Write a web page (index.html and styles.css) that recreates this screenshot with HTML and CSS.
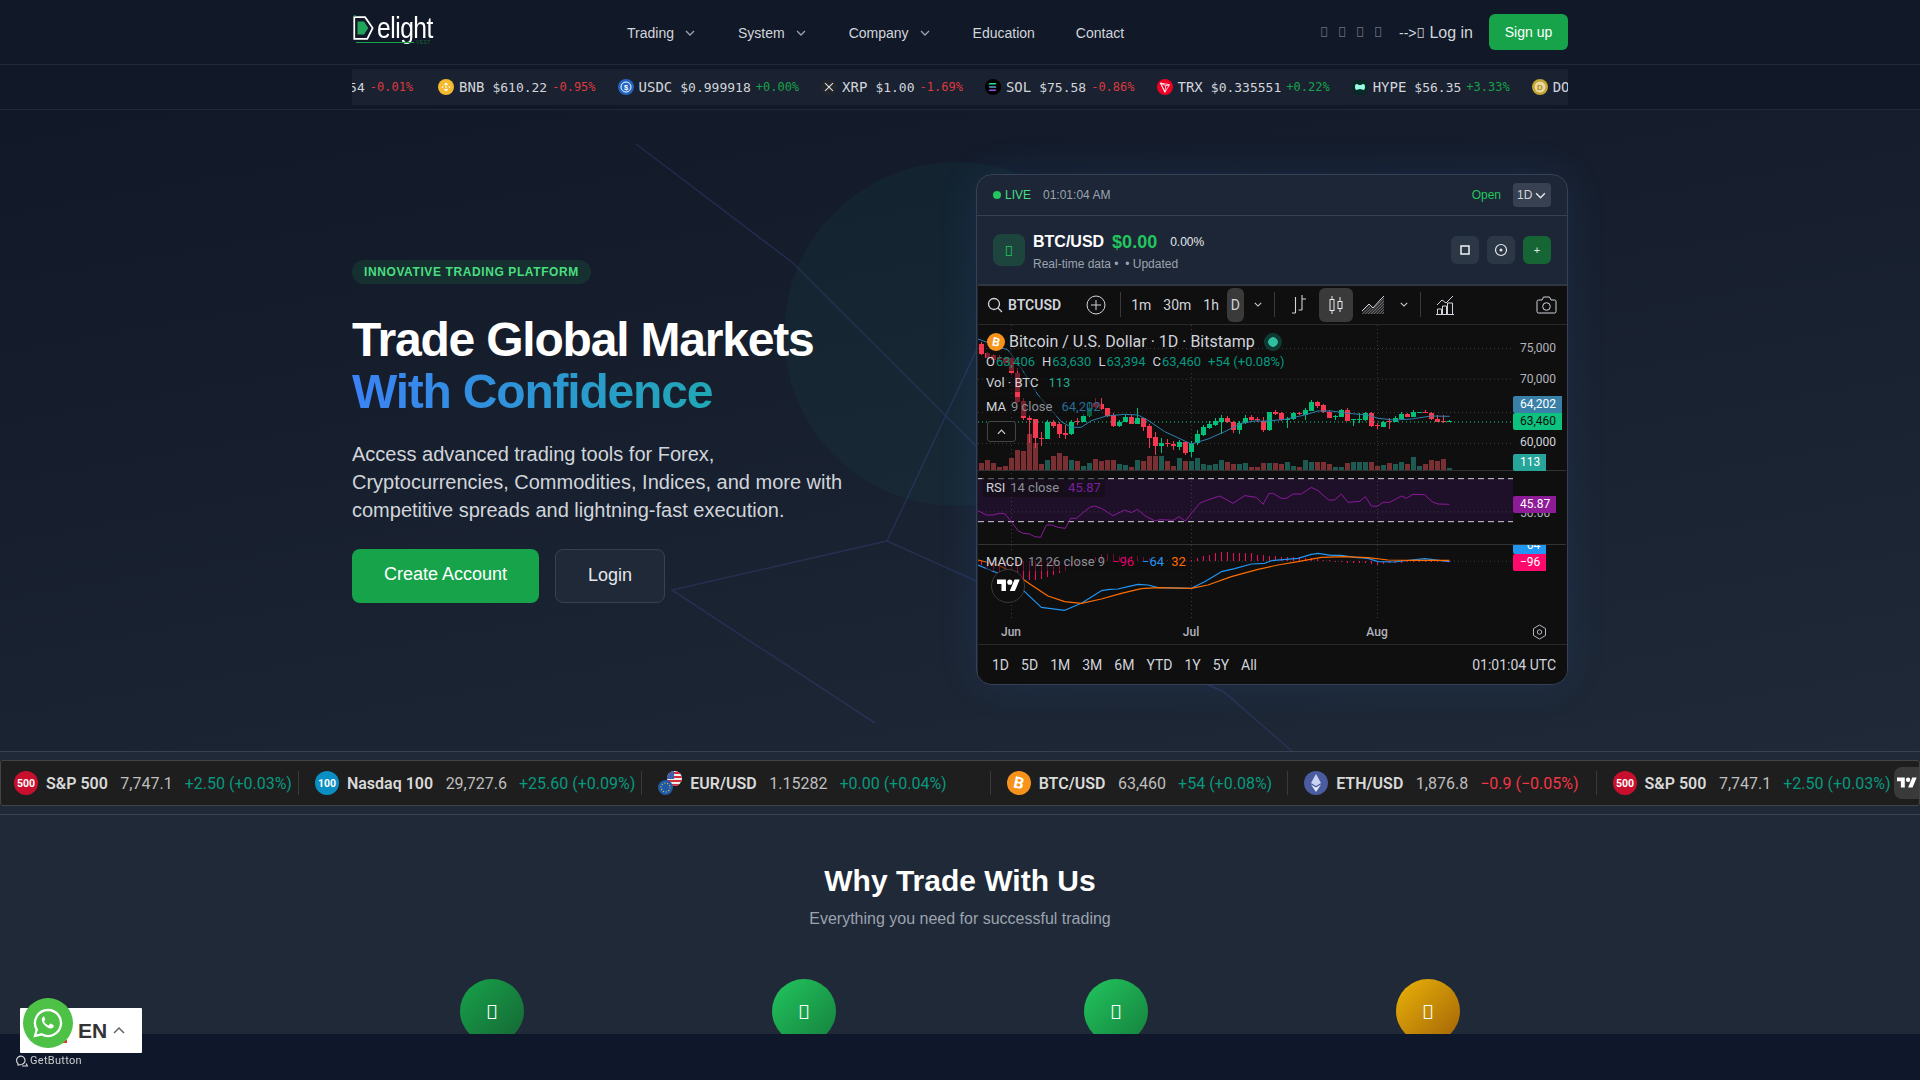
FILE: index.html
```html
<!DOCTYPE html>
<html lang="en">
<head>
<meta charset="utf-8">
<title>Delight - Trade Global Markets</title>
<link rel="stylesheet" href="styles.css">
</head>
<body>
<svg class="defs" width="0" height="0" aria-hidden="true">
  <symbol id="chev" viewBox="0 0 10 6"><path d="M1 1l4 4 4-4" fill="none" stroke="currentColor" stroke-width="1.3"/></symbol>
  <symbol id="tv" viewBox="0 0 36 28"><path d="M14 22H7V11H0V4h14v18zM28 22h-8l7.5-18h8L28 22z" fill="currentColor"/><circle cx="20" cy="8" r="4" fill="currentColor"/></symbol>
  <symbol id="btc" viewBox="0 0 24 24"><circle cx="12" cy="12" r="12" fill="#f7931a"/><text x="12" y="17.5" text-anchor="middle" font-family="Roboto" font-weight="700" font-size="16" fill="#fff" transform="rotate(12 12 12)">B</text></symbol>
  <symbol id="spx" viewBox="0 0 24 24"><circle cx="12" cy="12" r="12" fill="#c8102e"/><text x="12" y="16" text-anchor="middle" font-family="Roboto" font-weight="700" font-size="10.5" fill="#fff">500</text></symbol>
</svg>

<header class="topbar">
  <div class="wrap topbar-row">
    <a class="logo">
      <svg class="logo-mark" viewBox="0 0 20 24" width="20" height="24"><path d="M1 2h10l7 10-5 10H1z" fill="none" stroke="#fff" stroke-width="1.6"/><path d="M4 6h6l4 6-4 6H4z" fill="#22a55a"/><circle cx="1.5" cy="0.8" r="0.8" fill="#22a55a"/></svg>
      <span class="logo-word">elight</span>
      <span class="logo-rule"></span>
      <span class="logo-sub">VEST</span>
    </a>
    <nav class="mainnav">
      <a class="navlink">Trading <svg class="chev"><use href="#chev"/></svg></a>
      <a class="navlink">System <svg class="chev"><use href="#chev"/></svg></a>
      <a class="navlink">Company <svg class="chev"><use href="#chev"/></svg></a>
      <a class="navlink low">Education</a>
      <a class="navlink low last">Contact</a>
    </nav>
    <div class="userbox">
      <span class="social tofu">&#xf39e;</span><span class="social tofu">&#xf099;</span><span class="social tofu">&#xf16d;</span><span class="social tofu">&#xf0e1;</span>
      <a class="login"><span class="arrowtxt">--&gt;</span><span class="tofu login-ico">&#xf2f6;</span> Log in</a>
      <a class="signup">Sign up</a>
    </div>
  </div>
</header>

<div class="coinband">
  <div class="wrap coinstrip">
    <div class="coinrow">
      <span class="coin"><svg class="coinico" viewBox="0 0 16 16"><circle cx="8" cy="8" r="8" fill="#627eea"/></svg><b>ETH</b><i>$1,876.54</i><em class="dn">-0.01%</em></span>
      <span class="coin"><svg class="coinico" viewBox="0 0 16 16"><circle cx="8" cy="8" r="8" fill="#f3ba2f"/><path d="M8 3.5l2 2-1 1-1-1-1 1-1-1zM3.500 8l1-1 1 1-1 1zM10.500 8l1-1 1 1-1 1zM8 7l1 1-1 1-1-1zM8 12.500l-2-2 1-1 1 1 1-1 1 1z" fill="#fff"/></svg><b>BNB</b><i>$610.22</i><em class="dn">-0.95%</em></span>
      <span class="coin"><svg class="coinico" viewBox="0 0 16 16"><circle cx="8" cy="8" r="8" fill="#2265c4"/><circle cx="8" cy="8" r="5" fill="none" stroke="#fff" stroke-width="1"/><text x="8" y="10.600" text-anchor="middle" font-size="7.500" font-family="Liberation Sans" font-weight="700" fill="#fff">$</text></svg><b>USDC</b><i>$0.999918</i><em class="up">+0.00%</em></span>
      <span class="coin"><svg class="coinico" viewBox="0 0 16 16"><circle cx="8" cy="8" r="8" fill="#22262b"/><path d="M4 4.200l4 3.800 4-3.800M4 11.800L8 8l4 3.800" fill="none" stroke="#ddd" stroke-width="1.100"/></svg><b>XRP</b><i>$1.00</i><em class="dn">-1.69%</em></span>
      <span class="coin"><svg class="coinico" viewBox="0 0 16 16"><circle cx="8" cy="8" r="8" fill="#000"/><path d="M4.500 4h7l-1 1.600h-7z" fill="#19e6a4"/><path d="M3.500 7.200h7l1 1.600h-7z" fill="#5aa8d8"/><path d="M4.500 10.400h7l-1 1.600h-7z" fill="#a04cf0"/></svg><b>SOL</b><i>$75.58</i><em class="dn">-0.86%</em></span>
      <span class="coin"><svg class="coinico" viewBox="0 0 16 16"><circle cx="8" cy="8" r="8" fill="#ef0027"/><path d="M3.500 4l9 1.800-4.600 7.400zM3.500 4l4.400 9.200.8-6.400zM12.500 5.800L8.700 6.800" fill="none" stroke="#fff" stroke-width=".8"/></svg><b>TRX</b><i>$0.335551</i><em class="up">+0.22%</em></span>
      <span class="coin"><svg class="coinico" viewBox="0 0 16 16"><circle cx="8" cy="8" r="8" fill="#072a26"/><path d="M3 8c0-3 1.500-3.500 3-2.500 1 .8 3 .8 4 0 1.500-1 3-.5 3 2.500s-1.500 3.500-3 2.500c-1-.8-3-.8-4 0C4.500 11.500 3 11 3 8z" fill="#97fce4"/></svg><b>HYPE</b><i>$56.35</i><em class="up">+3.33%</em></span>
      <span class="coin"><svg class="coinico" viewBox="0 0 16 16"><circle cx="8" cy="8" r="8" fill="#c2a633"/><circle cx="8" cy="8" r="5.500" fill="#e8d9a0"/><text x="8" y="11" text-anchor="middle" font-size="8" font-family="Liberation Sans" font-weight="700" fill="#b08a20">D</text></svg><b>DOGE</b><i>$0.09</i><em class="up">+0.10%</em></span>
    </div>
  </div>
</div>

<section class="hero">
  <svg class="hero-bg" viewBox="0 0 1920 641" preserveAspectRatio="none" aria-hidden="true">
    <circle cx="956" cy="224" r="172" fill="#14b8a6" fill-opacity=".05"/>
    <path d="M636 34L793 153 1110 470M887 431L1000 190M887 431L672 480 875 613M887 431L1224 582 1292 641" fill="none" stroke="#3b4a8c" stroke-opacity=".35" stroke-width="1.500"/>
  </svg>
  <div class="wrap hero-grid">
    <div class="hero-copy">
      <span class="badge">INNOVATIVE TRADING PLATFORM</span>
      <h1>Trade Global Markets<br><span class="grad">With Confidence</span></h1>
      <p>Access advanced trading tools for Forex, Cryptocurrencies, Commodities, Indices, and more with competitive spreads and lightning-fast execution.</p>
      <div class="cta">
        <a class="btn btn-green">Create Account</a>
        <a class="btn btn-dark">Login</a>
      </div>
    </div>

    <div class="card">
      <div class="card-top">
        <span class="live-dot"></span><span class="live">LIVE</span><span class="clock">01:01:04 AM</span>
        <span class="open">Open</span>
        <span class="tf">1D <svg class="chev tf-chev"><use href="#chev"/></svg></span>
      </div>
      <div class="card-sym">
        <span class="sym-ico tofu">&#xf379;</span>
        <div class="sym-text">
          <div class="sym-line"><strong>BTC/USD</strong><span class="sym-price">$0.00</span><span class="sym-pct">0.00%</span></div>
          <div class="sym-sub">Real-time data •&nbsp; • Updated</div>
        </div>
        <div class="sym-btns">
          <span class="sq"><svg width="12" height="12" viewBox="0 0 12 12"><rect x="2" y="2" width="8" height="8" fill="none" stroke="#e5e7eb" stroke-width="1.600"/></svg></span>
          <span class="sq"><svg width="14" height="14" viewBox="0 0 14 14"><circle cx="7" cy="7" r="5.500" fill="none" stroke="#e5e7eb" stroke-width="1.200"/><circle cx="7" cy="7" r="1.500" fill="#e5e7eb"/></svg></span>
          <span class="sq sq-green">+</span>
        </div>
      </div>

      <div class="tv">
        <div class="tv-tools">
          <svg class="ti ti-search" width="16" height="16" viewBox="0 0 16 16"><circle cx="7" cy="7" r="5.500" fill="none" stroke="#d1d4dc" stroke-width="1.300"/><path d="M11 11l4 4" stroke="#d1d4dc" stroke-width="1.300"/></svg>
          <span class="tv-sym">BTCUSD</span>
          <svg class="ti ti-add" width="20" height="20" viewBox="0 0 20 20"><circle cx="10" cy="10" r="9" fill="none" stroke="#d1d4dc"/><path d="M10 5v10M5 10h10" stroke="#d1d4dc"/></svg>
          <span class="tsep s1"></span>
          <span class="tint i1m">1m</span><span class="tint i30">30m</span><span class="tint i1h">1h</span>
          <span class="tint tint-on">D</span>
          <svg class="chev ti-chev"><use href="#chev"/></svg>
          <span class="tsep s2"></span>
          <svg class="ti ti-bars" width="17" height="22" viewBox="0 0 17 22"><path d="M5.500 3v16M2 19h3.500M12 1v15M12 5h4M8.500 16H12" fill="none" stroke="#d1d4dc" stroke-width="1.100"/></svg>
          <span class="candle-on"><svg width="16" height="22" viewBox="0 0 16 22"><path d="M4 2v3M4 17v3M12 3v4M12 15v3" stroke="#e5e7eb"/><rect x="2" y="5.500" width="4" height="11" fill="none" stroke="#e5e7eb"/><rect x="10" y="7.500" width="4" height="7" fill="none" stroke="#e5e7eb"/></svg></span>
          <svg class="ti ti-area" width="24" height="20" viewBox="0 0 24 20"><defs><pattern id="hatch" width="2" height="2" patternUnits="userSpaceOnUse" patternTransform="rotate(45)"><path d="M0 0v2" stroke="#d1d4dc" stroke-width="1"/></pattern></defs><path d="M1 17l7-7 4 4 7-8 4-4v17H1z" fill="url(#hatch)"/><path d="M1 16l7-7 4 4 7-8 4-4" fill="none" stroke="#d1d4dc"/></svg>
          <svg class="chev ti-chev2"><use href="#chev"/></svg>
          <span class="tsep s3"></span>
          <svg class="ti ti-ind" width="18" height="20" viewBox="0 0 18 20"><path d="M1 10l5-5 4 3 7-7" fill="none" stroke="#d1d4dc"/><path d="M1.500 19v-5h4v5M6.500 19v-8h4v8M11.500 19V8h5v11M0 19.500h18" fill="none" stroke="#d1d4dc"/></svg>
          <svg class="ti ti-cam" width="21" height="18" viewBox="0 0 21 18"><path d="M1 5.500a1.500 1.500 0 0 1 1.500-1.500H6l1.500-3h6L15 4h3.500A1.500 1.500 0 0 1 20 5.500v10a1.500 1.500 0 0 1-1.500 1.500h-16A1.500 1.500 0 0 1 1 15.500z" fill="none" stroke="#d1d4dc"/><circle cx="10.500" cy="10.500" r="3.800" fill="none" stroke="#d1d4dc"/></svg>
        </div>

        <div class="canvas">
          <svg id="plot" class="plot" viewBox="0 -30 1764 885" aria-hidden="true"></svg>

          <div class="lg lg-title"><svg class="lg-btc"><use href="#btc"/></svg><span>Bitcoin / U.S. Dollar · 1D · Bitstamp</span><span class="lg-status"></span></div>
          <div class="lg lg-ohlc"><span>O</span><u>63,406</u><span class="m">H</span><u>63,630</u><span class="m">L</span><u>63,394</u><span class="m">C</span><u>63,460</u><u class="m">+54 (+0.08%)</u></div>
          <div class="lg lg-vol"><span>Vol · BTC</span><u class="vol">113</u></div>
          <div class="lg lg-ma"><span>MA</span><span class="g">9 close</span><u class="ma">64,202</u></div>
          <div class="collapse"><svg class="chev up"><use href="#chev"/></svg></div>
          <div class="lg lg-rsi"><span>RSI</span><span class="g">14 close</span><u class="rsi">45.87</u></div>
          <div class="lg lg-macd"><span>MACD</span><span class="g">12 26 close 9</span><u class="pk">−96</u><u class="bl">−64</u><u class="or">32</u></div>
          <span class="tvbadge"><svg width="23" height="18"><use href="#tv"/></svg></span>

          <span class="tick t75">75,000</span>
          <span class="tick t70">70,000</span>
          <span class="tick t60">60,000</span>
          <span class="tick t50">50.00</span>
          <span class="plabel p-ma">64,202</span>
          <span class="plabel p-last">63,460</span>
          <span class="plabel p-vol">113</span>
          <span class="plabel p-rsi">45.87</span>
          <span class="clip-64"><span class="plabel p-64">−64</span></span>
          <span class="plabel p-96">−96</span>
        </div>

        <div class="timeaxis">
          <span class="mon mjun">Jun</span><span class="mon mjul">Jul</span><span class="mon maug">Aug</span>
          <svg class="hexcog" width="15" height="16" viewBox="0 0 15 16"><path d="M7.500 1l6 3.500v7l-6 3.500-6-3.500v-7z" fill="none" stroke="#b2b5be"/><circle cx="7.500" cy="8" r="2.200" fill="none" stroke="#b2b5be"/></svg>
        </div>
        <div class="ranges">
          <span>1D</span><span>5D</span><span>1M</span><span>3M</span><span>6M</span><span>YTD</span><span>1Y</span><span>5Y</span><span>All</span>
          <span class="utc">01:01:04 UTC</span>
        </div>
      </div>
    </div>
  </div>
</section>

<section class="tickersec">
  <div class="tape">
    <div class="tape-item"><svg class="tape-ico"><use href="#spx"/></svg><b>S&amp;P 500</b><i>7,747.1</i><em class="tup">+2.50 (+0.03%)</em></div>
    <div class="tape-item"><svg class="tape-ico" viewBox="0 0 24 24"><circle cx="12" cy="12" r="12" fill="#0a8fc4"/><text x="12" y="16" text-anchor="middle" font-family="Roboto" font-weight="700" font-size="10.500" fill="#fff">100</text></svg><b>Nasdaq 100</b><i>29,727.6</i><em class="tup">+25.60 (+0.09%)</em></div>
    <div class="tape-item pad-eur"><svg class="tape-ico" viewBox="0 0 24 24"><clipPath id="usc"><circle cx="16.500" cy="7.500" r="7.500"/></clipPath><g clip-path="url(#usc)"><rect x="9" width="15" height="15" fill="#eee"/><path d="M9 2h15M9 6h15M9 10h15M9 14h15" stroke="#d22f3c" stroke-width="2"/><rect x="9" width="7" height="8" fill="#3c5fb0"/></g><circle cx="7.500" cy="16.500" r="7.500" fill="#1f5aa8"/><circle cx="7.500" cy="16.500" r="4.500" fill="none" stroke="#f4c430" stroke-width="1.200" stroke-dasharray="1 1.800"/></svg><b>EUR/USD</b><i>1.15282</i><em class="tup">+0.00 (+0.04%)</em></div>
    <div class="tape-item pad-btc"><svg class="tape-ico"><use href="#btc"/></svg><b>BTC/USD</b><i>63,460</i><em class="tup">+54 (+0.08%)</em></div>
    <div class="tape-item pad-eth"><svg class="tape-ico" viewBox="0 0 24 24"><circle cx="12" cy="12" r="12" fill="#4a5ba0"/><path d="M12 3l5 9-5 3-5-3z" fill="#c9d4f5"/><path d="M12 16.500l5-3-5 7.500-5-7.500z" fill="#e4eafc"/></svg><b>ETH/USD</b><i>1,876.8</i><em class="tdn">−0.9 (−0.05%)</em></div>
    <div class="tape-item"><svg class="tape-ico"><use href="#spx"/></svg><b>S&amp;P 500</b><i>7,747.1</i><em class="tup">+2.50 (+0.03%)</em></div>
    <span class="tape-tab"><svg width="20" height="16"><use href="#tv"/></svg></span>
  </div>
</section>

<section class="features">
  <h2>Why Trade With Us</h2>
  <p class="lead">Everything you need for successful trading</p>
  <div class="feat-row">
    <span class="feat f-a tofu">&#xf201;</span>
    <span class="feat f-b tofu">&#xf3ed;</span>
    <span class="feat f-b tofu">&#xf0e7;</span>
    <span class="feat f-c tofu">&#xf590;</span>
  </div>
</section>

<div class="footband"></div>

<div class="langbox">
  <span class="flagbit"></span>
  <span class="en">EN</span>
  <svg class="lang-chev" viewBox="0 0 12 7"><path d="M1 6l5-5 5 5" fill="none" stroke="#666" stroke-width="1.500"/></svg>
</div>
<span class="wa">
  <svg width="32" height="32" viewBox="0 0 32 32"><path d="M16 3a13 13 0 0 0-11.200 19.600L3 29l6.600-1.700A13 13 0 1 0 16 3z" fill="none" stroke="#fff" stroke-width="2.300"/><path d="M12 9.500c-.5 0-1.500.5-2 1.800-.6 1.600 0 3.700 2 6.200 2.200 2.700 4.700 4 6.600 4 1.600 0 2.900-1 3.100-2.300.1-.6 0-1-.3-1.200l-2.600-1.300c-.4-.2-.7 0-.9.300l-1 1.200c-.2.200-.5.200-.8.100-1.800-.8-3.100-2-4-3.700-.1-.3 0-.5.200-.7l.8-1c.2-.3.200-.5.100-.8l-1.100-2.500c-.1-.1-.2-.1-.1-.1z" fill="#fff"/></svg>
</span>
<span class="getbutton"><svg width="12" height="12" viewBox="0 0 12 12"><path d="M2 8.500A4.200 4.200 0 1 1 5.500 9.500L2 10z" fill="none" stroke="#ddd" stroke-width="1.100"/><path d="M6 11h5.500L10 8.500" fill="none" stroke="#ddd" stroke-width="1.100"/></svg>GetButton</span>

<script src="chart.js"></script>
</body>
</html>
```

FILE: styles.css
```css
* { box-sizing: border-box; }
html, body { margin: 0; height: 100%; }
body {
  width: 1920px; height: 1080px; overflow: hidden;
  display: flex; flex-direction: column;
  background: #111827; color: #fff;
  font-family: "Liberation Sans", Arial, sans-serif;
  position: relative;
}
.defs { position: absolute; }
i, em { font-style: normal; }
u { text-decoration: none; }
.wrap { width: 1216px; margin: 0 auto; }
.chev { width: 10px; height: 6px; color: #9ca3af; display: inline-block; }
.tofu { font-family: "Noto Sans", sans-serif; }

/* top bar */
.topbar { height: 65px; flex: none; background: #111827; border-bottom: 1px solid #1f2937; }
.topbar-row { height: 64px; display: flex; align-items: center; position: relative; }
.logo { position: relative; width: 82px; height: 30px; display: block; margin-top: -4px; }
.logo-mark { position: absolute; left: 1px; top: 0; width: 22px; height: 26px; }
.logo-word { position: absolute; left: 25px; top: -2px; font-size: 30px; line-height: 30px; letter-spacing: -.6px; color: #fff; transform: scaleX(.82); transform-origin: left center; }
.logo-rule { position: absolute; left: 4px; top: 27px; width: 58px; height: 1px; background: #16a34a; }
.logo-sub { position: absolute; left: 64px; top: 25px; font-size: 5px; line-height: 5px; color: #166534; letter-spacing: .4px; }
.mainnav { display: flex; align-items: center; gap: 43px; margin-left: 193px; padding-top: 2px; }
.navlink { font-size: 14px; color: #d1d5db; display: flex; align-items: center; gap: 11px; }
.navlink.last { margin-left: -2px; }
.userbox { margin-left: auto; display: flex; align-items: center; }
.social { font-size: 14px; color: #6b7280; width: 18px; line-height: 16px; }
.login { font-size: 16px; color: #d1d5db; margin-left: 7px; white-space: nowrap; }
.arrowtxt { font-size: 14px; }
.login-ico { font-size: 14px; }
.signup { margin-left: 16px; width: 79px; height: 36px; border-radius: 6px; background: #16a34a; color: #fff; font-size: 14px; display: flex; align-items: center; justify-content: center; }

/* coin strip */
.coinband { flex: none; height: 45px; padding: 4px 0; background: #111827; border-bottom: 1px solid #1f2937; }
.coinstrip { height: 36px; background: #1a2130; overflow: hidden; }
.coinrow { display: flex; align-items: center; height: 36px; gap: 22px; margin-left: -112px; white-space: nowrap; font-family: "DejaVu Sans Mono", monospace; }
.coin { display: flex; align-items: center; flex: none; }
.coin:first-child { margin-right: 3px; }
.coinico { width: 16px; height: 16px; margin-right: 5px; }
.coin b { font-weight: 400; font-size: 14px; color: #d1d5db; margin-right: 8px; }
.coin i { font-size: 13px; color: #d1d5db; margin-right: 5px; }
.coin em { font-size: 12px; }
.dn { color: #dc3a3f; }
.up { color: #16a34a; }

/* hero */
.hero { flex: none; height: 641px; position: relative; background: linear-gradient(170deg, #111827 0%, #1f2937 100%); padding-top: 64px; overflow: hidden; }
.hero-bg { position: absolute; left: 0; top: 0; width: 1920px; height: 641px; }
.hero-grid { position: relative; display: grid; grid-template-columns: 592px 592px; column-gap: 32px; align-items: center; }
.hero-copy { padding-top: 3px; }
.badge { display: inline-block; height: 24px; line-height: 24px; padding: 0 12px; border-radius: 12px; background: rgba(34,197,94,.12); color: #4ade80; font-size: 12px; font-weight: 700; letter-spacing: .6px; }
h1 { margin: 30px 0 0; font-size: 48px; line-height: 52px; font-weight: 700; letter-spacing: -1.2px; color: #fff; }
.grad { background: linear-gradient(90deg, #3b82f6, #20a8b4); -webkit-background-clip: text; background-clip: text; color: transparent; }
.hero-copy p { margin: 22px 0 0; width: 512px; font-size: 20px; line-height: 28px; color: #d1d5db; }
.cta { display: flex; gap: 16px; margin-top: 25px; }
.btn { height: 54px; border-radius: 8px; font-size: 18px; display: flex; align-items: center; justify-content: center; }
.btn-green { width: 187px; background: #16a34a; color: #fff; padding-bottom: 2px; }
.btn-dark { width: 110px; background: #1f2937; border: 1px solid #374151; color: #e5e7eb; }

/* card */
.card { height: 511px; border: 1px solid #374151; border-radius: 16px; overflow: hidden; background: #1c2636; box-shadow: 0 0 40px rgba(59,130,246,.12); display: flex; flex-direction: column; }
.card-top { flex: none; height: 41px; display: flex; align-items: center; padding: 0 16px; border-bottom: 1px solid #374151; font-size: 12px; }
.live-dot { width: 8px; height: 8px; border-radius: 50%; background: #22c55e; }
.live { color: #4ade80; margin-right: 12px; margin-left: 4px; }
.clock { color: #9ca3af; }
.open { color: #22c55e; margin-left: auto; margin-right: 12px; }
.tf { width: 38px; height: 24px; border-radius: 4px; background: #374151; color: #d1d5db; display: flex; align-items: center; padding-left: 4px; gap: 3px; }
.tf-chev { color: #e5e7eb; width: 11px; height: 7px; }
.card-sym { flex: none; height: 68px; display: flex; align-items: center; padding: 0 16px; }
.sym-ico { width: 32px; height: 32px; border-radius: 8px; background: rgba(34,197,94,.2); color: #22c55e; font-size: 14px; display: flex; align-items: center; justify-content: center; }
.sym-text { margin-left: 8px; }
.sym-line { display: flex; align-items: center; margin-top: 2px; }
.sym-line strong { font-size: 16px; color: #fff; }
.sym-price { font-size: 18px; font-weight: 700; color: #22c55e; margin-left: 8px; }
.sym-pct { font-size: 12px; color: #e5e7eb; margin-left: 13px; }
.sym-sub { font-size: 12px; color: #9ca3af; margin-top: 4px; }
.sym-btns { margin-left: auto; display: flex; gap: 8px; }
.sq { width: 28px; height: 28px; border-radius: 6px; background: #2c3746; display: flex; align-items: center; justify-content: center; color: #e5e7eb; font-size: 11px; }
.sq-green { background: #166534; }

/* chart */
.tv { flex: 1; background: #0f0f0f; border-top: 2px solid #2f3744; margin: 0 0 0 1px; display: flex; flex-direction: column; font-family: Roboto, sans-serif; color: #d1d4dc; }
.tv-tools { flex: none; height: 39px; display: flex; align-items: center; border-bottom: 1px solid #2a2a2a; padding-left: 9px; padding-bottom: 1px; }
.ti { flex: none; }
.tv-sym { font-size: 14px; font-weight: 600; margin-left: 5px; }
.ti-add { margin-left: 25px; }
.tsep { width: 1px; height: 25px; background: #3a3a3a; flex: none; }
.s1 { margin-left: 14px; }
.tint { font-size: 14px; }
.i1m { margin-left: 10px; }
.i30 { margin-left: 12px; }
.i1h { margin-left: 12px; }
.tint-on { width: 17px; height: 34px; margin-left: 8px; border-radius: 6px; background: #3a3a3a; display: flex; align-items: center; justify-content: center; }
.ti-chev { width: 8px; height: 5px; margin-left: 10px; color: #d1d4dc; }
.s2 { margin-left: 12px; }
.ti-bars { margin-left: 15px; }
.candle-on { width: 34px; height: 34px; margin-left: 12px; border-radius: 6px; background: #3a3a3a; display: flex; align-items: center; justify-content: center; }
.ti-area { margin-left: 8px; }
.ti-chev2 { width: 8px; height: 5px; margin-left: 15px; color: #d1d4dc; }
.s3 { margin-left: 12px; }
.ti-ind { margin-left: 15px; }
.ti-cam { margin-left: auto; margin-right: 10px; }

.canvas { flex: none; height: 295px; position: relative; overflow: hidden; }
.plot { position: absolute; left: 0; top: 0; width: 588px; height: 295px; }
.lg { position: absolute; left: 8px; display: flex; align-items: center; height: 19px; font-size: 13px; gap: 5px; white-space: nowrap; color: #d1d4dc; background: rgba(15,15,15,.55); }
.lg-title { top: 7px; font-size: 16px; gap: 4px; left: 9px; background: none; }
.lg-btc { width: 18px; height: 18px; }
.lg-status { width: 18px; height: 18px; margin-left: 5px; border-radius: 50%; background: radial-gradient(circle, #2fbf9f 0 4.500px, #0f3a33 5px); }
.lg-ohlc { top: 27px; gap: 1px; color: #d1d4dc; }
.lg-ohlc u { color: #089981; }
.lg-ohlc .m { margin-left: 6px; }
.lg-vol { top: 48px; gap: 10px; }
.lg-ma { top: 72px; }
.g { color: #8c8f98; }
.vol { color: #22ab94; }
.ma { color: #2a6d9a; margin-left: 4px; }
.rsi { color: #7b1fa2; margin-left: 4px; }
.pk { color: #e4006a; margin-left: 2px; }
.bl { color: #2196f3; margin-left: 3px; }
.or { color: #ff6d00; margin-left: 2px; }
.lg-rsi { top: 152px; padding-right: 4px; height: 20px; left: 4px; padding-left: 4px; }
.lg-macd { top: 227px; }
.collapse { position: absolute; left: 9px; top: 96px; width: 29px; height: 21px; border: 1px solid #444; border-radius: 3px; display: flex; align-items: center; justify-content: center; background: #0f0f0f; }
.chev.up { transform: rotate(180deg); color: #d1d4dc; width: 9px; }
.tvbadge { position: absolute; left: 13px; top: 244px; width: 34px; height: 34px; border-radius: 50%; background: #0f0f0f; border: 1px solid #3a3a3a; color: #fff; display: flex; align-items: center; justify-content: center; }
.tick { position: absolute; left: 542px; font-size: 12px; color: #b2b5be; line-height: 16px; }
.t75 { top: 15px; }
.t70 { top: 46px; }
.t60 { top: 109px; color: #d1d4dc; }
.t50 { top: 180px; }
.plabel { position: absolute; left: 535px; font-size: 12px; line-height: 17px; height: 17px; color: #fff; padding: 0 7px; border-radius: 2px 0 0 2px; }
.p-ma { top: 71px; width: 49px; background: #3880a8; }
.p-last { top: 88px; width: 49px; background: #0cc27e; color: #0f0f0f; }
.p-vol { top: 129px; width: 33px; background: #26a69a; }
.p-rsi { top: 171px; width: 43px; background: #8e1b97; }
.clip-64 { position: absolute; left: 535px; top: 220px; width: 33px; height: 9px; overflow: hidden; }
.p-64 { left: 0; top: -8px; width: 33px; background: #2196f3; }
.p-96 { top: 229px; width: 33px; background: #ff0a6c; }

.timeaxis { flex: none; height: 25px; position: relative; border-bottom: 1px solid #2a2a2a; }
.mon { position: absolute; top: 5px; font-size: 12px; font-weight: 500; color: #b2b5be; transform: translateX(-50%); }
.mjun { left: 33px; }
.mjul { left: 213px; }
.maug { left: 399px; }
.hexcog { position: absolute; left: 554px; top: 4px; }
.ranges { flex: 1; display: flex; align-items: center; font-size: 14px; gap: 12px; padding: 0 11px 0 14px; color: #d1d4dc; }
.utc { margin-left: auto; }

/* tape */
.tickersec { flex: none; height: 64px; background: #1f2937; border-top: 1px solid #374151; border-bottom: 1px solid #374151; padding-top: 8px; }
.tape { height: 46px; background: #1e1e1e; border: 1px solid #434343; border-radius: 3px; display: flex; align-items: center; padding-left: 13px; position: relative; overflow: hidden; white-space: nowrap; font-family: Roboto, sans-serif; font-size: 16px; }
.tape-item { display: flex; align-items: center; flex: none; height: 24px; padding-right: 6px; margin-right: 16px; border-right: 1px solid #3a3a3a; }
.pad-eur { padding-right: 43px; }
.pad-btc { padding-right: 15px; }
.pad-eth { padding-right: 17px; }
.tape-ico { width: 24px; height: 24px; margin-right: 8px; flex: none; }
.tape-item b { font-weight: 600; color: #d9d9d9; margin-right: 12.500px; }
.tape-item i { color: #bfbfbf; margin-right: 12px; }
.tup { color: #089981; }
.tdn { color: #f23645; }
.tape-tab { position: absolute; right: 0; top: 6px; width: 25px; height: 32px; background: #3a3a3a; border-radius: 8px 0 0 8px; color: #fff; display: flex; align-items: center; justify-content: center; }

/* features */
.features { flex: 1; min-height: 0; overflow: hidden; background: #1f2937; text-align: center; padding-top: 48px; }
h2 { margin: 0; font-size: 30px; line-height: 36px; font-weight: 700; color: #fff; }
.lead { margin: 8px 0 0; font-size: 16px; line-height: 24px; color: #9ca3af; }
.feat-row { display: grid; grid-template-columns: repeat(4, 64px); column-gap: 248px; justify-content: center; margin-top: 48px; }
.feat { width: 64px; height: 64px; border-radius: 50%; color: #fff; font-size: 20px; display: flex; align-items: center; justify-content: center; }
.f-a { background: linear-gradient(135deg, #16a34a, #166534); }
.f-b { background: linear-gradient(135deg, #22c55e, #15803d); }
.f-c { background: linear-gradient(135deg, #eab308, #a16207); }
.footband { flex: none; height: 46px; background: #0f172a; }

/* floating widgets */
.langbox { position: fixed; left: 20px; top: 1008px; width: 122px; height: 45px; background: #fff; border-radius: 1px; display: flex; align-items: center; padding-left: 58px; gap: 6px; }
.flagbit { position: absolute; left: 42px; top: 32px; width: 5px; height: 3px; background: #d33; }
.en { font-size: 21px; font-weight: 700; color: #333; }
.lang-chev { width: 12px; height: 7px; }
.wa { position: fixed; left: 23px; top: 998px; width: 50px; height: 50px; border-radius: 50%; background: #4dc247; display: flex; align-items: center; justify-content: center; }
.getbutton { position: fixed; left: 16px; top: 1055px; display: flex; align-items: center; gap: 2px; font-family: Roboto, sans-serif; font-size: 11px; line-height: 12px; color: #ccc; letter-spacing: .3px; }
```

FILE: chart.js
```js
(function () {
  var NS = 'http://www.w3.org/2000/svg';
  var svg = document.getElementById('plot');
  var RED = '#f7374f', GRN = '#00bf78', VRED = '#7a2f32', VGRN = '#1c5a52';

  function el(name, attrs) {
    var n = document.createElementNS(NS, name);
    for (var k in attrs) n.setAttribute(k, attrs[k]);
    svg.appendChild(n);
    return n;
  }
  function pts(list, dy) {
    return list.map(function (p) { return p[0] + ',' + (p[1] + dy); }).join(' ');
  }
  function crispY(v) { return Math.round(v / 3) * 3; }

  /* color, body top, body bottom, wick top, wick bottom, volume top */
  var c = [
    ['r',27,57,20,60,385],['r',55,68,50,72,376],['r',60,75,56,78,384],['r',65,71,60,74,396],['r',70,85,66,88,392],
    ['r',70,115,65,120,369],['r',115,200,100,205,345],['r',198,250,190,255,348],['r',250,254,240,325,297],['r',252,308,252,340,325],
    ['r',308,312,290,332,388],['g',262,312,255,312,376],['r',262,272,255,280,363],['r',267,297,262,310,355],['r',295,300,270,312,364],
    ['g',260,298,255,300,376],['r',258,261,248,270,378],['g',243,260,238,262,392],['g',218,242,200,245,385],['r',205,215,190,218,372],
    ['r',208,222,190,225,378],['r',220,243,218,245,375],['r',240,272,235,275,375],['g',260,272,255,275,388],['g',245,260,238,262,390],
    ['r',247,266,240,268,395],['g',250,266,218,268,376],['r',250,275,248,288,378],['r',273,308,268,340,363],['r',306,332,290,360,363],
    ['g',325,332,310,355,363],['r',323,326,312,335,378],['r',327,333,318,345,392],['g',322,335,315,345,370],['r',322,355,320,360,378],
    ['g',325,352,318,365,378],['g',298,325,285,330,369],['g',277,300,270,302,388],['g',268,278,258,282,390],['g',258,270,250,272,388],
    ['g',250,260,240,298,376],['r',250,262,243,265,380],['r',262,285,258,295,388],['g',265,285,258,298,386],['g',248,265,240,268,385],
    ['r',245,255,240,258,396],['r',252,255,246,260,396],['r',257,285,245,292,385],['g',232,285,232,287,383],['r',232,237,225,240,384],
    ['r',235,255,232,258,388],['g',252,255,245,278,382],['g',235,253,232,256,392],['r',233,237,230,240,395],['g',226,240,220,255,376],
    ['g',202,227,195,228,380],['r',202,212,198,218,380],['r',210,232,206,234,382],['r',230,248,224,250,388],['g',244,247,240,255,396],
    ['g',226,245,222,247,395],['r',226,257,218,258,384],['g',252,255,252,272,382],['g',252,254,235,265,380],['g',235,255,230,257,380],
    ['r',235,272,230,275,380],['r',270,273,265,282,393],['g',260,275,258,275,389],['r',258,260,250,282,384],['g',250,260,242,262,386],
    ['g',238,252,232,254,380],['r',237,245,234,247,386],['g',232,245,226,247,366],['g',231,233,230,234,392],['r',231,233,224,235,388],
    ['r',235,253,230,255,375],['r',253,260,240,262,378],['r',258,261,240,264,372],['g',258,260,256,261,399]
  ];

  var ma = [[0,12],[90,45],[130,100],[180,180],[250,260],[280,277],[310,277],[340,257],[385,243],[440,238],[480,240],[510,256],[560,290],[640,327],[690,312],[740,290],[790,265],[830,258],[870,258],[920,253],[980,240],[1020,228],[1060,228],[1110,235],[1170,240],[1200,250],[1250,255],[1300,252],[1360,243],[1415,244]];
  var rsi = [[0,122],[25,135],[45,135],[65,130],[80,131],[100,155],[120,182],[135,190],[155,192],[170,200],[188,202],[205,165],[220,165],[240,172],[262,175],[278,145],[295,145],[315,128],[335,112],[350,108],[370,115],[405,137],[440,120],[460,128],[478,118],[505,140],[530,152],[550,149],[585,151],[603,140],[622,153],[640,130],[665,100],[680,93],[725,78],[765,100],[800,77],[835,82],[855,103],[873,70],[885,70],[910,85],[925,85],[945,72],[970,72],[1000,52],[1020,62],[1052,90],[1070,90],[1090,72],[1110,97],[1145,94],[1162,80],[1180,108],[1198,109],[1215,97],[1235,97],[1270,78],[1285,85],[1305,73],[1340,74],[1362,95],[1380,102],[1414,103]];
  var macd = [[0,285],[60,310],[110,335],[140,365],[190,412],[260,421],[310,400],[370,362],[395,358],[420,357],[450,350],[480,343],[510,345],[540,353],[640,355],[680,335],[730,305],[770,296],[820,282],[860,280],[880,272],[960,265],[1000,253],[1020,250],[1060,256],[1090,256],[1130,262],[1170,265],[1200,275],[1250,276],[1300,270],[1340,266],[1414,275]];
  var signal = [[0,270],[60,285],[110,310],[160,345],[210,378],[260,395],[310,400],[370,387],[430,370],[490,356],[540,353],[640,355],[690,345],[760,320],[840,298],[900,285],[960,275],[1030,262],[1100,260],[1170,263],[1230,270],[1300,271],[1414,271]];
  var hist = [285,295,305,312,318,324,330,330,330,330,328,320,316,310,303,292,285,278,268,260,253,253,253,258,258,258,258,262,265,270,270,270,270,270,270,271,265,258,255,248,245,245,248,250,250,250,255,255,258,258,260,262,262,262,265,265,268,270,270,276,276,278,280,280,280,282,285,283,280,278,278,276,276,275,275,275,276,276,276];

  var O = 405; /* rows of the lower panes start this far below the main pane's origin */

  el('rect', { x: 0, y: 25 + O, width: 1605, height: 130, fill: '#1f102a' });

  [40, 132, 232, 325, 125 + O, 273 + O].forEach(function (y) {
    el('path', { d: 'M0 ' + (y + 0.5) + 'H1605', stroke: '#3d3d3d', 'stroke-width': 3, 'stroke-dasharray': '3 9' });
  });
  [100, 640, 1198].forEach(function (x) {
    el('path', { d: 'M' + (x + 0.5) + ' -30V855', stroke: '#3d3d3d', 'stroke-width': 3, 'stroke-dasharray': '3 9' });
  });

  c.forEach(function (d, i) {
    var x = 3 + 18 * i;
    var vt = crispY(d[5]);
    el('rect', { x: x, y: vt, width: 15, height: 405 - vt, fill: d[0] === 'r' ? VRED : VGRN, 'shape-rendering': 'crispEdges' });
  });
  c.forEach(function (d, i) {
    var x = 3 + 18 * i, col = d[0] === 'r' ? RED : GRN;
    var wt = crispY(d[3]), wb = crispY(d[4]), bt = crispY(d[1]), bb = Math.max(crispY(d[2]), bt + 3);
    el('rect', { x: x + 6, y: wt, width: 3, height: wb - wt, fill: col, 'shape-rendering': 'crispEdges' });
    el('rect', { x: x, y: bt, width: 15, height: bb - bt, fill: col, 'shape-rendering': 'crispEdges' });
  });

  el('path', { d: 'M0 261H1605', stroke: '#12d48a', 'stroke-width': 3, 'stroke-dasharray': '3 9' });
  el('polyline', { points: pts(ma, 0), fill: 'none', stroke: '#2f7fae', 'stroke-width': 3, 'stroke-linejoin': 'round' });

  el('path', { d: 'M0 ' + (26 + O) + 'H1605M0 ' + (155 + O) + 'H1605', stroke: '#cfcfd8', 'stroke-width': 3, 'stroke-dasharray': '18 12' });
  el('polyline', { points: pts(rsi, O), fill: 'none', stroke: '#8a1a9a', 'stroke-width': 3, 'stroke-linejoin': 'round' });

  hist.forEach(function (h, i) {
    var x = 9 + 18 * i, base = 273 + O, y = crispY(h + O);
    el('rect', { x: x, y: Math.min(y, base), width: 3, height: Math.abs(y - base), fill: '#f5076a', 'shape-rendering': 'crispEdges' });
  });
  el('polyline', { points: pts(macd, O), fill: 'none', stroke: '#2196f3', 'stroke-width': 3.5, 'stroke-linejoin': 'round' });
  el('polyline', { points: pts(signal, O), fill: 'none', stroke: '#ff6d00', 'stroke-width': 3.5, 'stroke-linejoin': 'round' });

  el('path', { d: 'M0 406.500H1764M0 628.500H1764', stroke: '#333', 'stroke-width': 3, 'shape-rendering': 'crispEdges' });
})();
```
